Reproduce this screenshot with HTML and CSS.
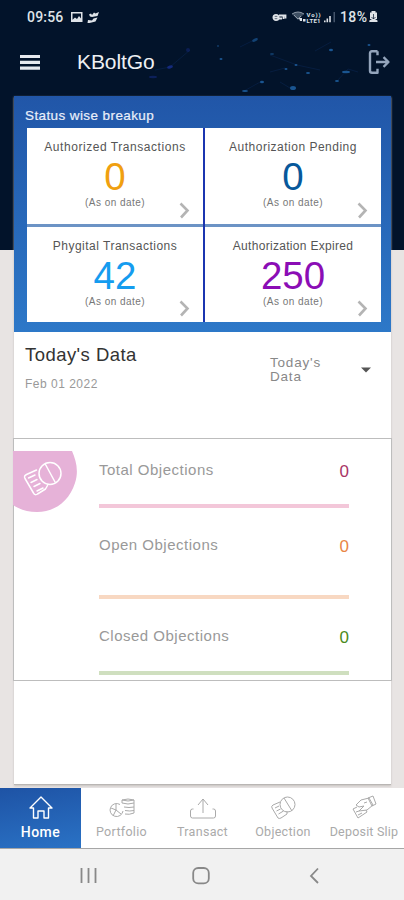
FILE: index.html
```html
<!DOCTYPE html>
<html lang="en">
<head>
<meta charset="utf-8">
<title>KBoltGo</title>
<link rel="stylesheet" href="styles.css">
</head>
<body>
<div class="phone">
  <svg class="stars" width="404" height="250" viewBox="0 0 404 250" aria-hidden="true">
    <g fill="none" stroke="#123a80" stroke-width="1" opacity=".25"><path d="M155 70l15-3 20-17M240 47l18-9M270 55l27 10 23 5M285 68l-15 4M315 51l16-9M337 81l11-12 10 3M262 81l-18 10M290 88l-10-6"/></g>
    <g fill="#1a5590"><ellipse cx="255" cy="40" rx="3" ry="1.5" transform="rotate(-25 255 40)" opacity=".7"/><ellipse cx="331" cy="50" rx="2" ry="1.3"/><ellipse cx="346" cy="72" rx="4" ry="1.2"/><ellipse cx="337" cy="81" rx="2" ry="1"/><ellipse cx="262" cy="82" rx="2" ry="1.3"/><ellipse cx="293" cy="88" rx="3" ry="2"/><ellipse cx="245" cy="91" rx="3" ry="1"/><ellipse cx="286" cy="69" rx="1.5" ry="1"/><ellipse cx="296" cy="65" rx="1.5" ry="1"/><ellipse cx="308" cy="73" rx="2" ry="1"/><ellipse cx="369" cy="45" rx="1.5" ry="1"/><ellipse cx="221" cy="59" rx="1.5" ry="1"/><ellipse cx="272" cy="54" rx="2" ry="1" opacity=".6"/><ellipse cx="218" cy="46" rx="1" ry="1" opacity=".6"/></g>
    <g fill="#142a7c"><ellipse cx="170" cy="67" rx="3" ry="1.5" transform="rotate(-15 170 67)"/><ellipse cx="153" cy="77" rx="4" ry="1.2" opacity=".6"/><ellipse cx="188" cy="50" rx="2" ry="2" opacity=".5"/></g>
  </svg>

  <header class="status">
    <span class="clock">09:56</span>
    <svg class="status-left" width="29" height="13" viewBox="0 0 29 13">
      <path fill="#dfe3e8" fill-rule="evenodd" d="M1 1h11.500v10H1zM2.500 2.500v6.300L5 6.500l2 1.500L9 5l2 2.500v-5z"/>
      <path fill="#dfe3e8" d="M19 3.500l2-1 1 1.500 2-2.500 1.500 1L29 1l-1.500 4-3 .5L22 6l-2-.5zM18 9l4 .5 1.500-2 4-1-2 4-6 1.500h-2z"/>
    </svg>
    <svg class="status-right" width="68" height="14" viewBox="0 0 68 14">
      <g fill="none" stroke="#dfe3e8" stroke-width="1.800"><circle cx="4" cy="7.500" r="2.600"/><path d="M2 7.500h4M7 5.500h6.500v3M7 8.500h3M11.500 6v3"/></g>
      <path fill="#3f5064" d="M20 4q6-4 12 0l-6 6z"/><path fill="none" stroke="#8e9aa8" d="M20 4q6-4 12 0M22 5l4 4 3-3"/>
      <path fill="#dfe3e8" d="M27 8h3v3h-2zM31 9h2.500v2.500H31z"/>
      <text class="volte" x="34.500" y="7" textLength="14">Vo))</text><text class="volte" x="34.500" y="12.500" textLength="14">LTE1</text>
      <path fill="#dfe3e8" d="M52 10.500h1.600v1.700H52zM54.500 8.500h1.600v3.700h-1.600zM57.200 6h1.600v6.200h-1.600z"/><path fill="#44546a" d="M61.500 2H63v10.200h-1.500z"/>
    </svg>
    <span class="percent">18%</span>
    <svg class="battery" width="9" height="14" viewBox="0 0 9 14"><path fill="#dfe3e8" d="M2.500 1h4v1.500H8V9H6l2.500 1.500V12H.3v-1.500L3 9H1V2.500h1.500z"/><path stroke="#02132b" d="M4.500 4v5M2.500 7l2 2 2-2" fill="none" stroke-width=".7"/></svg>
  </header>

  <div class="appbar">
    <svg width="21" height="17" viewBox="0 0 21 17"><path stroke="#e6e9ee" stroke-width="3.200" d="M0 2.500h20M0 8.300h20M0 14.100h20"/></svg>
    <h1 class="brand">KBoltGo</h1>
    <svg class="logout" width="23" height="26" viewBox="0 0 23 26"><g fill="none" stroke="#94a5bc" stroke-width="2.400" stroke-linejoin="round"><path d="M9.500 2.300H4Q2 2.300 2 4.300v17.400q0 2 2 2h5.500v-4M9.500 2.300v4"/><path stroke-width="2.300" d="M8 13h12M15.500 8.200l5 4.800-5 4.800"/></g></svg>
  </div>

  <main class="main">
    <section class="breakup">
      <h2 class="breakup-title">Status wise breakup</h2>
      <div class="tiles">
        <article class="tile"><div class="tile-name n1">Authorized Transactions</div><div class="tile-value amber">0</div><div class="tile-note">(As on date)</div><svg class="chev" width="11" height="17" viewBox="0 0 11 17"><path d="M1.500 1.500L8.500 8.500 2 15.500"/></svg></article>
        <article class="tile"><div class="tile-name n2">Authorization Pending</div><div class="tile-value navy">0</div><div class="tile-note">(As on date)</div><svg class="chev" width="11" height="17" viewBox="0 0 11 17"><path d="M1.500 1.500L8.500 8.500 2 15.500"/></svg></article>
        <article class="tile"><div class="tile-name n3">Phygital Transactions</div><div class="tile-value sky">42</div><div class="tile-note">(As on date)</div><svg class="chev" width="11" height="17" viewBox="0 0 11 17"><path d="M1.500 1.500L8.500 8.500 2 15.500"/></svg></article>
        <article class="tile"><div class="tile-name n4">Authorization Expired</div><div class="tile-value purple">250</div><div class="tile-note">(As on date)</div><svg class="chev" width="11" height="17" viewBox="0 0 11 17"><path d="M1.500 1.500L8.500 8.500 2 15.500"/></svg></article>
      </div>
    </section>

    <section class="today">
      <div class="today-text"><h3 class="today-title">Today's Data</h3><div class="today-date">Feb 01 2022</div></div>
      <div class="select"><span>Today's<br>Data</span><svg width="10" height="6" viewBox="0 0 10 6"><path fill="#555" d="M0 .5h10L5 5.500z"/></svg></div>
    </section>

    <section class="objections">
      <div class="badge">
        <svg width="64" height="61" viewBox="0 0 64 61"><path fill="#e6b2d8" d="M0 0h59c4 9 7 20 3 32C56 51 41 61 24 61 14 61 6 58 0 54z"/>
          <g fill="none" stroke="#fff" stroke-width="1.500" stroke-linecap="round" stroke-linejoin="round"><circle cx="37" cy="22.500" r="11"/><path d="M32.500 13.500l9.500 17.500M23.500 19l-10 4.500c-2 1-2.500 2-1.500 4l8.500 14.500c1 2 2.500 2 4 1l8-5 2-3.500M15.500 27l6.500-3M18 31.500l6-3M21 35.500l6-3M24 40l6-3"/></g></svg>
      </div>
      <div class="rows">
        <div class="row total"><span>Total Objections</span><b>0</b></div>
        <div class="row open"><span>Open Objections</span><b>0</b></div>
        <div class="row closed"><span>Closed Objections</span><b>0</b></div>
      </div>
    </section>
  </main>

  <nav class="tabs">
    <a class="tab active"><svg width="28" height="26" viewBox="0 0 28 26"><path d="M3 13L14 2l11 11H21.500v10H17v-7h-6v7H6.500V13z"/></svg><span>Home</span></a>
    <a class="tab t2"><svg width="28" height="26" viewBox="0 0 28 26"><path d="M12 9.500A6.500 6.500 0 1 0 15 16M8 9v6l5 4M3 13l5 2-3 6M14 8V5q6-2 12 0v13q-5 2-9 1M14 5q6 2 12 0M14 8q6 2 12 0M16 12q5 1 10 0M17 15.500q5 1 9 0"/></svg><span>Portfolio</span></a>
    <a class="tab t3"><svg width="28" height="26" viewBox="0 0 28 26"><path d="M14 18V4M9 10l5-6 5 6M4.500 14H3.500q-2 0-2 2v5q0 2 2 2h21q2 0 2-2v-5q0-2-2-2h-1"/></svg><span>Transact</span></a>
    <a class="tab t4"><svg width="28" height="26" viewBox="0 0 28 26"><circle cx="18.500" cy="9.500" r="7.500"/><path d="M15 3l8 13M11 7l-7 3q-2 1-1 3l6 10q1 1 3 0l6-4v-3M6 13l4-2M7.500 16l4-2M9.500 19l5-3"/></svg><span>Objection</span></a>
    <a class="tab t5"><svg width="28" height="26" viewBox="0 0 28 26"><path d="M7 12l-4 2 5 9 9-6-1-2M6 17l3-1M8 20l4-2M6 10l5-5 8-2 4 7-6 5-8 1 5-5-5 1zM18 3l5-2 3 8-4 2zM14 8l3-1"/></svg><span>Deposit Slip</span></a>
  </nav>

  <footer class="system">
    <svg width="17" height="18" viewBox="0 0 17 18"><path d="M1.500 1v15M8.500 1v15M15.500 1v15"/></svg>
    <svg width="18" height="18" viewBox="0 0 18 18"><rect x="1.200" y="1" width="15.600" height="15.400" rx="5"/></svg>
    <svg width="11" height="18" viewBox="0 0 11 18"><path d="M9 1.500L2 9l7 7"/></svg>
  </footer>
</div>
</body>
</html>
```
FILE: styles.css
```css
* { box-sizing: border-box; }
body { margin: 0; font-family: "Liberation Sans", Arial, sans-serif; }
h1, h2, h3 { margin: 0; font-weight: 400; }
svg { display: block; flex: none; }

.phone {
  position: relative;
  display: flex;
  flex-direction: column;
  width: 404px;
  height: 900px;
  overflow: hidden;
  background: linear-gradient(#02132a 0 250px, #e8e4e3 250px);
}
.stars { position: absolute; top: 0; left: 0; }

.status {
  position: relative;
  display: flex;
  align-items: center;
  height: 34px;
  padding-left: 27px;
  color: #dfe3e8;
  font: 500 14px/34px Roboto, sans-serif;
}
.clock { width: 43px; letter-spacing: .2px; }
.status-left { margin-right: 173px; }
.volte { fill: #dfe3e8; font: 700 6px Roboto, sans-serif; }
.percent { width: 29px; letter-spacing: .4px; }

.appbar {
  position: relative;
  display: flex;
  align-items: center;
  height: 62px;
  padding: 0 13px 6px 20px;
}
.brand { margin-left: 36px; color: #eef0f3; font-size: 21px; letter-spacing: -.1px; }
.logout { margin-left: auto; }

.main {
  position: relative;
  display: flex;
  flex-direction: column;
  width: 377px;
  height: 689px;
  margin-left: 14px;
  background: #fff;
  border-bottom: 1px solid #b9b6b4;
  box-shadow: 0 1px 2px #c5c0bd;
}

.breakup {
  height: 236px;
  padding: 10px 10px 10px 13px;
  background: linear-gradient(#2156a8, #2d78c8);
}
.breakup-title { margin-left: -2px; height: 22px; color: #e9effa; font-size: 13.5px; line-height: 19px; letter-spacing: .4px; -webkit-text-stroke: .2px; }
.tiles {
  display: grid;
  grid-template: 96px 95px / 176px 176px;
  gap: 3px 2px;
  height: 194px;
  background: linear-gradient(90deg, transparent 176px, #1b35b0 176px 178px, transparent 178px), linear-gradient(transparent 96px, #6c93c5 96px 99px, transparent 99px);
}
.tile { position: relative; padding-top: 11px; background: #fff; text-align: center; }
.tile-name { height: 16px; color: #555; font-size: 12px; line-height: 16px; }
.n1 { letter-spacing: .55px; }
.n2 { letter-spacing: .5px; }
.n3 { letter-spacing: .5px; }
.n4 { letter-spacing: .3px; }
.tile-value { height: 41px; font-size: 38.5px; line-height: 44px; }
.tile-note { color: #777; font-size: 10px; line-height: 13px; letter-spacing: .45px; }
.chev { position: absolute; right: 13px; bottom: 5px; fill: none; stroke: #b4b4b4; stroke-width: 2.6; }
.amber { color: #f0a010; }
.navy { color: #07589b; }
.sky { color: #159cef; }
.purple { color: #8b0db5; }

.today { display: flex; height: 106px; padding: 12px 20px 0 11px; }
.today-title { color: #333; font-size: 18.5px; line-height: 22px; letter-spacing: .45px; }
.today-date { margin-top: 10px; color: #999; font-size: 12px; line-height: 16px; letter-spacing: .5px; }
.select {
  display: flex;
  align-items: center;
  justify-content: space-between;
  width: 101px;
  height: 28px;
  margin: 12px 0 0 auto;
  color: #888;
  font-size: 13.5px;
  line-height: 14px;
  letter-spacing: .8px;
}

.objections { display: flex; height: 243px; border: 1px solid #bdbdbd; margin: 0 -1px; }
.badge { width: 85px; padding-top: 12px; }
.badge svg { margin-left: -1px; }
.rows { width: 250px; }
.row { display: flex; justify-content: space-between; color: #999; font-size: 15px; line-height: 20px; letter-spacing: .5px; }
.row b { font-size: 17px; font-weight: 400; letter-spacing: 0; padding-top: 2px; }
.total { height: 69px; padding-top: 21px; border-bottom: 4px solid #f3c7d9; }
.open { height: 91px; padding-top: 27px; border-bottom: 4px solid #f8d8c2; }
.closed { height: 76px; padding-top: 27px; border-bottom: 4px solid #cfdfbf; }
.total b { color: #a93566; }
.open b { color: #e98545; }
.closed b { color: #4c8a20; }

.tabs {
  position: relative;
  display: grid;
  grid-template-columns: 81px 81px 81px 80px 81px;
  height: 61px;
  margin-top: 3px;
  background: #fff;
  border-bottom: 1px solid #a6a6a6;
}
.tab {
  display: flex;
  flex-direction: column;
  align-items: center;
  padding-top: 7px;
  color: #aaa;
  font: 12.5px/18px Roboto, sans-serif;
  letter-spacing: .3px;
  white-space: nowrap;
}
.t5 { padding-left: 1px; letter-spacing: .2px; }
.tab svg { margin-bottom: 2px; fill: none; stroke: #aaa; stroke-width: 1; stroke-linejoin: round; }
.active { background: linear-gradient(170deg, #1e53a5, #2a72c5); color: #fff; font-weight: 500; font-size: 14px; letter-spacing: .5px; }
.tab.active svg { stroke: #fff; stroke-width: 1.4; }

.system {
  display: flex;
  flex: 1;
  padding: 18px 0 0 80px;
  background: #f1f1f1;
}
.system svg { margin-right: 95px; fill: none; stroke: #888; stroke-width: 1.8; }
.system svg:nth-child(2) { margin-right: 99px; }
```
